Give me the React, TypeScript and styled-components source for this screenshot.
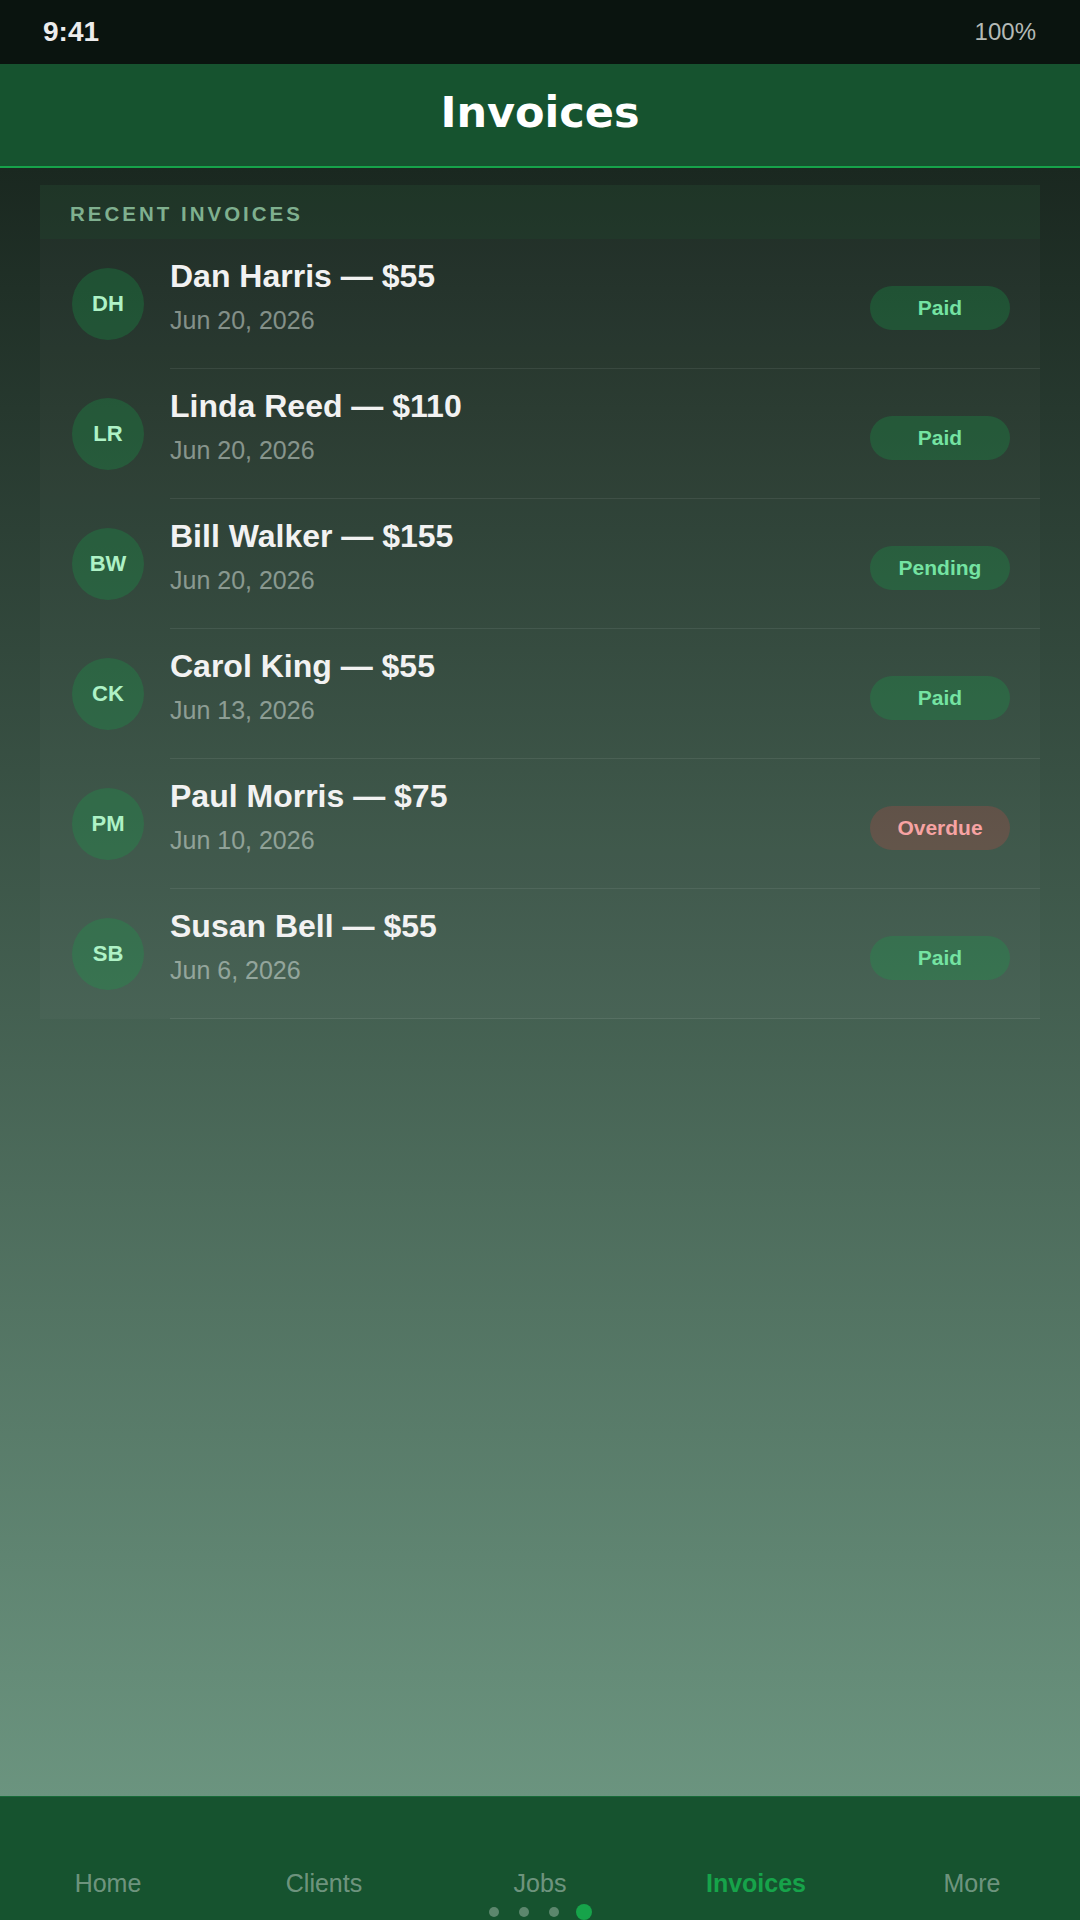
import React from "react";
import styled, { createGlobalStyle } from "styled-components";

const Global = createGlobalStyle`
  html, body { margin: 0; padding: 0; }
  body { font-family: "Liberation Sans", Arial, sans-serif; background: #0b1510; }
  * { box-sizing: border-box; }
`;

const Screen = styled.div`
  width: 1080px;
  height: 1920px;
  display: flex;
  flex-direction: column;
  overflow: hidden;
`;

const StatusBar = styled.div`
  height: 64px;
  flex: 0 0 64px;
  background: #0a140f;
  display: flex;
  align-items: center;
  justify-content: space-between;
  padding: 0 44px 0 43px;
`;

const Clock = styled.span`
  font-size: 28px;
  font-weight: 700;
  color: #ececec;
`;

const Battery = styled.span`
  font-size: 24px;
  color: #b4bab6;
`;

const Header = styled.header`
  height: 104px;
  flex: 0 0 104px;
  background: #16532f;
  border-bottom: 2px solid #16a34a;
  padding-top: 24px;
  text-align: center;
`;

const Title = styled.h1`
  margin: 0;
  font-family: "DejaVu Sans", Verdana, sans-serif;
  font-weight: 700;
  font-size: 43px;
  line-height: 49px;
  color: #ffffff;
`;

const Main = styled.main`
  flex: 1 1 auto;
  background: linear-gradient(180deg, #1a2820 0%, #6b947f 100%);
  padding: 17px 40px;
`;

const Card = styled.section`
  background: rgba(255, 255, 255, 0.025);
`;

const SectionHead = styled.div`
  height: 54px;
  display: flex;
  align-items: center;
  padding-left: 30px;
  padding-top: 4px;
  background: rgba(22, 163, 74, 0.06);
  font-size: 20.5px;
  font-weight: 700;
  letter-spacing: 3px;
  color: #7fb08f;
  text-transform: uppercase;
`;

const Row = styled.div`
  display: flex;
  align-items: center;
  padding-left: 32px;
  height: 130px;
`;

const Avatar = styled.div`
  flex: 0 0 72px;
  width: 72px;
  height: 72px;
  border-radius: 50%;
  background: rgba(22, 163, 74, 0.28);
  color: #aef2c6;
  font-size: 22px;
  font-weight: 700;
  display: flex;
  align-items: center;
  justify-content: center;
`;

const Body = styled.div`
  flex: 1 1 auto;
  height: 130px;
  margin-left: 26px;
  padding-right: 30px;
  border-bottom: 1px solid rgba(255, 255, 255, 0.08);
  display: flex;
  align-items: center;
`;

const Info = styled.div`
  align-self: flex-start;
  padding-top: 19px;
  display: flex;
  flex-direction: column;
`;

const Name = styled.div`
  font-size: 32px;
  line-height: 36px;
  font-weight: 700;
  color: #f2f2f2;
`;

const DateText = styled.div`
  margin-top: 12px;
  font-size: 25px;
  line-height: 28px;
  color: rgba(225, 235, 229, 0.5);
`;

type Status = "Paid" | "Pending" | "Overdue";

const Badge = styled.div<{ $status: Status }>`
  margin-left: auto;
  margin-top: 8px;
  width: 140px;
  height: 44px;
  border-radius: 22px;
  display: flex;
  align-items: center;
  justify-content: center;
  font-size: 21px;
  font-weight: 700;
  background: ${(p) =>
    p.$status === "Overdue" ? "rgba(239, 68, 68, 0.2)" : "rgba(22, 163, 74, 0.28)"};
  color: ${(p) => (p.$status === "Overdue" ? "#f7a3a3" : "#74e3a2")};
`;

const Nav = styled.nav`
  flex: 0 0 124px;
  height: 124px;
  background: #16532f;
  border-top: 1px solid rgba(34, 197, 94, 0.22);
  padding-top: 72px;
  display: flex;
  flex-direction: column;
`;

const Tabs = styled.div`
  display: grid;
  grid-template-columns: repeat(5, 1fr);
`;

const Tab = styled.div<{ $active?: boolean }>`
  text-align: center;
  font-size: 25px;
  line-height: 29px;
  font-weight: ${(p) => (p.$active ? 700 : 400)};
  color: ${(p) => (p.$active ? "#16a34a" : "rgba(255, 255, 255, 0.4)")};
`;

const Dots = styled.div`
  margin-top: 6px;
  display: flex;
  justify-content: center;
  align-items: center;
  gap: 20px;
  height: 16px;
`;

const Dot = styled.span<{ $active?: boolean }>`
  width: ${(p) => (p.$active ? 16 : 10)}px;
  height: ${(p) => (p.$active ? 16 : 10)}px;
  border-radius: 50%;
  margin-left: ${(p) => (p.$active ? -3 : 0)}px;
  background: ${(p) => (p.$active ? "#16a34a" : "rgba(255, 255, 255, 0.3)")};
`;

const invoices: { initials: string; name: string; amount: string; date: string; status: Status }[] = [
  { initials: "DH", name: "Dan Harris", amount: "$55", date: "Jun 20, 2026", status: "Paid" },
  { initials: "LR", name: "Linda Reed", amount: "$110", date: "Jun 20, 2026", status: "Paid" },
  { initials: "BW", name: "Bill Walker", amount: "$155", date: "Jun 20, 2026", status: "Pending" },
  { initials: "CK", name: "Carol King", amount: "$55", date: "Jun 13, 2026", status: "Paid" },
  { initials: "PM", name: "Paul Morris", amount: "$75", date: "Jun 10, 2026", status: "Overdue" },
  { initials: "SB", name: "Susan Bell", amount: "$55", date: "Jun 6, 2026", status: "Paid" },
];

const tabs = ["Home", "Clients", "Jobs", "Invoices", "More"];

export default function App() {
  return (
    <>
      <Global />
      <Screen>
        <StatusBar>
          <Clock>9:41</Clock>
          <Battery>100%</Battery>
        </StatusBar>
        <Header>
          <Title>Invoices</Title>
        </Header>
        <Main>
          <Card>
            <SectionHead>Recent Invoices</SectionHead>
            {invoices.map((inv) => (
              <Row key={inv.initials}>
                <Avatar>{inv.initials}</Avatar>
                <Body>
                  <Info>
                    <Name>
                      {inv.name} — {inv.amount}
                    </Name>
                    <DateText>{inv.date}</DateText>
                  </Info>
                  <Badge $status={inv.status}>{inv.status}</Badge>
                </Body>
              </Row>
            ))}
          </Card>
        </Main>
        <Nav>
          <Tabs>
            {tabs.map((t) => (
              <Tab key={t} $active={t === "Invoices"}>
                {t}
              </Tab>
            ))}
          </Tabs>
          <Dots>
            <Dot />
            <Dot />
            <Dot />
            <Dot $active />
          </Dots>
        </Nav>
      </Screen>
    </>
  );
}
